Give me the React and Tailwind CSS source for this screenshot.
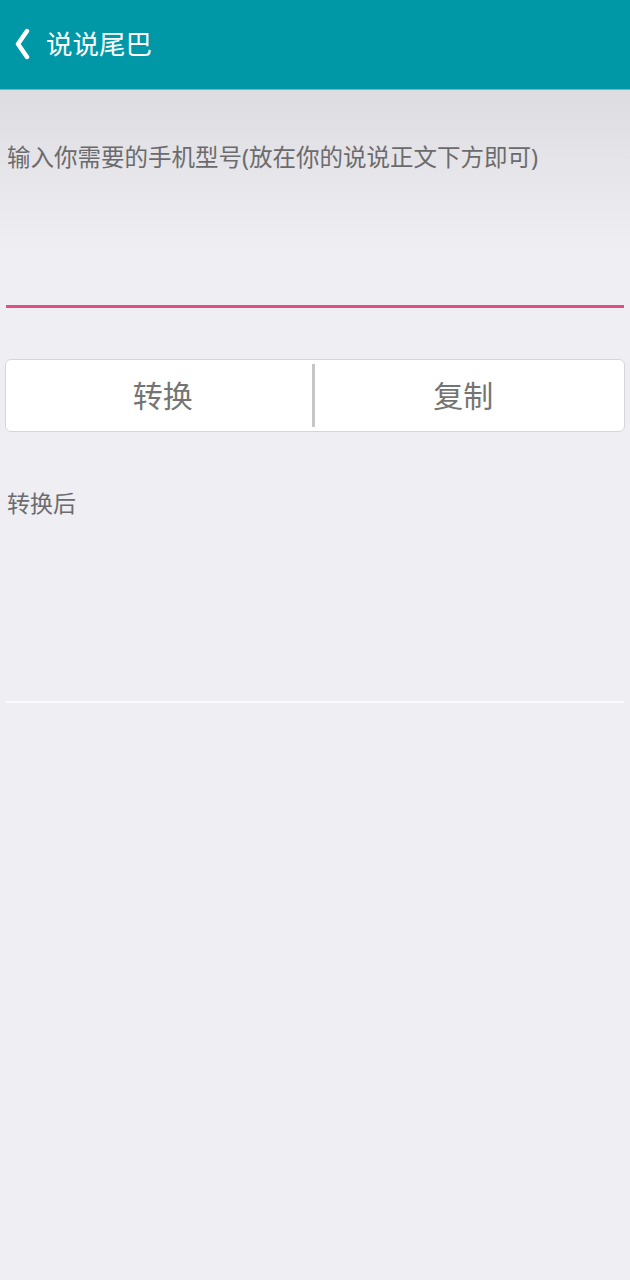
import React from "react";

const font = { fontFamily: '"Noto Sans", "Noto Sans CJK SC", sans-serif' };

export default function App() {
  return (
    <div className="w-[630px] h-[1280px] bg-[#efeef3] flex flex-col" style={font}>
      {/* Header */}
      <div className="h-[90px] bg-[#0097a7] flex items-center px-[13px] border-b border-[#5fbfcb]">
        <svg width="18" height="32" viewBox="0 0 18 32" className="mt-[-2px]">
          <path d="M14 3 L5 16 L14 29" fill="none" stroke="#fff" strokeWidth="4.5" strokeLinecap="round" strokeLinejoin="round" />
        </svg>
        <span className="ml-[15px] text-[26.5px] text-white leading-none">说说尾巴</span>
      </div>

      {/* Content */}
      <div className="bg-gradient-to-b from-[#dcdce1] to-[#efeef3] h-[160px] shrink-0 flex flex-col">
        <div className="pt-[52px] px-[7px] text-[23.5px] text-[#6b6b6e] leading-[30px]">
          输入你需要的手机型号(放在你的说说正文下方即可)
        </div>
      </div>
      <div className="mt-[55px] mx-[6px] h-[3px] bg-[#e24d83]" />

      <div className="mt-[51px] mx-[5px] h-[73px] bg-white rounded-[6px] border border-[#d6d6d9] flex items-stretch">
        <button className="flex-1 text-[30px] text-[#747474] flex items-center justify-center pl-[8px]">转换</button>
        <div className="w-[3px] bg-[#c6c6c6] my-[4px]" />
        <button className="flex-1 text-[30px] text-[#747474] flex items-center justify-center pr-[12px]">复制</button>
      </div>

      <div className="mt-[56px] px-[7px] text-[23px] text-[#6b6b6e] leading-[30px]">转换后</div>
      <div className="mt-[183px] mx-[6px] h-[2px] bg-[#fafafc]" />
    </div>
  );
}
